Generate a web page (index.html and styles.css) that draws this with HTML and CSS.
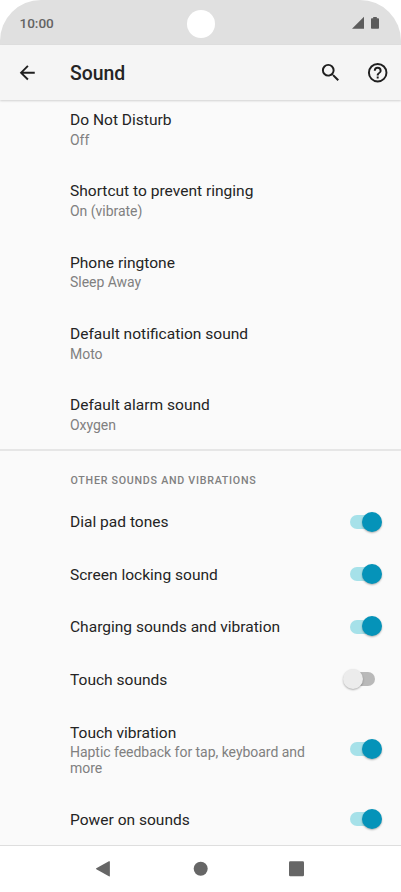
FILE: index.html
```html
<!DOCTYPE html>
<html lang="en">
<head>
<meta charset="utf-8">
<title>Sound</title>
<link rel="stylesheet" href="styles.css">
</head>
<body>
<div class="phone">
  <header class="status">
    <span class="clock">10:00</span>
    <span class="camera"></span>
    <svg class="status-icons" width="28" height="14" viewBox="0 0 28 14"><path d="M0 12.7L12 .8v11.9z"/><path d="M21.2 1h3.6v1.2h1.4q.8 0 .8.8v9q0 .8-.8.8h-6.4q-.8 0-.8-.8V3q0-.8.8-.8h1.4z"/></svg>
  </header>
  <div class="appbar">
    <svg class="icon back" viewBox="0 0 24 24"><path d="M20 11H7.83l5.59-5.59L12 4l-8 8 8 8 1.41-1.41L7.83 13H20z"/></svg>
    <h1>Sound</h1>
    <svg class="icon search" viewBox="0 0 24 24"><path d="M15.5 14h-.79l-.28-.27A6.47 6.47 0 0 0 16 9.5 6.5 6.5 0 1 0 9.5 16c1.61 0 3.09-.59 4.23-1.57l.27.28v.79l5 4.99L20.49 19zm-6 0a4.5 4.5 0 1 1 0-9 4.5 4.5 0 0 1 0 9z"/></svg>
    <svg class="icon help" viewBox="0 0 24 24"><path d="M11 18h2v-2h-2zm1-16a10 10 0 1 0 0 20 10 10 0 0 0 0-20zm0 18a8 8 0 1 1 0-16 8 8 0 0 1 0 16zm0-14a4 4 0 0 0-4 4h2a2 2 0 1 1 4 0c0 2-3 1.75-3 5h2c0-2.25 3-2.5 3-5a4 4 0 0 0-4-4z"/></svg>
  </div>
  <main>
    <section class="group">
      <div class="row two"><div class="title">Do Not Disturb</div><div class="sub">Off</div></div>
      <div class="row two"><div class="title">Shortcut to prevent ringing</div><div class="sub">On (vibrate)</div></div>
      <div class="row two"><div class="title">Phone ringtone</div><div class="sub">Sleep Away</div></div>
      <div class="row two"><div class="title">Default notification sound</div><div class="sub">Moto</div></div>
      <div class="row two"><div class="title">Default alarm sound</div><div class="sub">Oxygen</div></div>
    </section>
    <section class="others">
      <h2>OTHER SOUNDS AND VIBRATIONS</h2>
      <div class="row toggle"><div class="title">Dial pad tones</div><span class="switch on"></span></div>
      <div class="row toggle"><div class="title">Screen locking sound</div><span class="switch on"></span></div>
      <div class="row toggle"><div class="title">Charging sounds and vibration</div><span class="switch on"></span></div>
      <div class="row toggle"><div class="title">Touch sounds</div><span class="switch"></span></div>
      <div class="row toggle tall"><div class="text"><div class="title">Touch vibration</div><div class="sub">Haptic feedback for tap, keyboard and more</div></div><span class="switch on"></span></div>
      <div class="row toggle"><div class="title">Power on sounds</div><span class="switch on"></span></div>
    </section>
  </main>
  <nav>
    <svg width="401" height="46" viewBox="0 0 401 46"><path d="M96.3 22.3L108.9 15.3q1-.5 1 .5v14q0 1-1 .5L96.3 23.3q-.8-.5 0-1z"/><circle cx="200.7" cy="22.7" r="7"/><rect x="289" y="15.3" width="15" height="15" rx="1.2"/></svg>
  </nav>
</div>
</body>
</html>
```
FILE: styles.css
```css
* { box-sizing: border-box; }
body { margin: 0; background: #fff; font-family: Roboto, sans-serif; color: #242424; }
.phone { width: 401px; height: 892px; display: flex; flex-direction: column; overflow: hidden; }
.status {
  height: 45px; flex: none; background: #e0e0e0; border-radius: 41px 41px 0 0;
  display: grid; grid-template-columns: 1fr 28px 1fr; align-items: center; padding: 4px 20.5px 0 19.5px;
}
.clock { font-size: 13.6px; font-weight: 500; color: #646464; letter-spacing: -.05px; margin-top: -4px; }
.camera { width: 28px; height: 28px; border-radius: 50%; background: #fff; margin: -1px 0 0 .6px; }
.status-icons { justify-self: end; margin: -4px 1px 0 0; fill: #5c5c5c; }
.appbar {
  height: 55px; flex: none; background: #f5f5f5; display: flex; align-items: center;
  padding: 1px 12px 0 16px; box-shadow: 0 1px 2px rgba(0,0,0,.16); position: relative; z-index: 1;
}
.icon { width: 23.4px; height: 23.4px; fill: #1f1f1f; flex: none; }
.back { width: 22.5px; }
h1 { margin: 2px auto 0 31.5px; font-size: 19.4px; font-weight: 500; line-height: 24px; }
.help { margin-left: 23.5px; }
main { flex: 1; min-height: 0; background: #fafafa; overflow: hidden; }
.group { margin-top: -7.4px; border-bottom: 2px solid #e6e6e6; }
.row { padding-left: 70px; }
.two { height: 71.3px; padding-top: 17.3px; }
.title { font-size: 15.55px; line-height: 21px; }
.sub { font-size: 14px; line-height: 16.3px; color: #808080; margin-top: .2px; letter-spacing: -.03px; }
.two .sub { margin-top: .8px; }
h2 {
  margin: 0; height: 45.2px; padding: 23px 0 0 70.5px; font-size: 10.7px; line-height: 14px;
  font-weight: 500; letter-spacing: .73px; color: #808080;
}
.toggle { height: 52.4px; display: flex; align-items: center; justify-content: space-between; padding-right: 26px; }
.toggle .title { padding-top: 1px; }
.tall { height: 87.5px; }
.tall .text { margin-top: -1px; }
.text { width: 245px; }
.switch { width: 25px; height: 14px; border-radius: 7px; background: #b9b9b9; flex: none; position: relative; top: -.5px; }
.switch::after {
  content: ""; position: absolute; width: 20px; height: 20px; border-radius: 50%;
  top: -3.3px; left: -7px; background: #ececec; box-shadow: 0 1px 2px rgba(0,0,0,.3);
}
.on { background: #a6e1e9; }
.on::after { left: 12px; background: #0593b9; }
nav { height: 47px; flex: none; background: #fff; border-top: 1px solid #dedede; }
nav svg { display: block; fill: #666; }
```
